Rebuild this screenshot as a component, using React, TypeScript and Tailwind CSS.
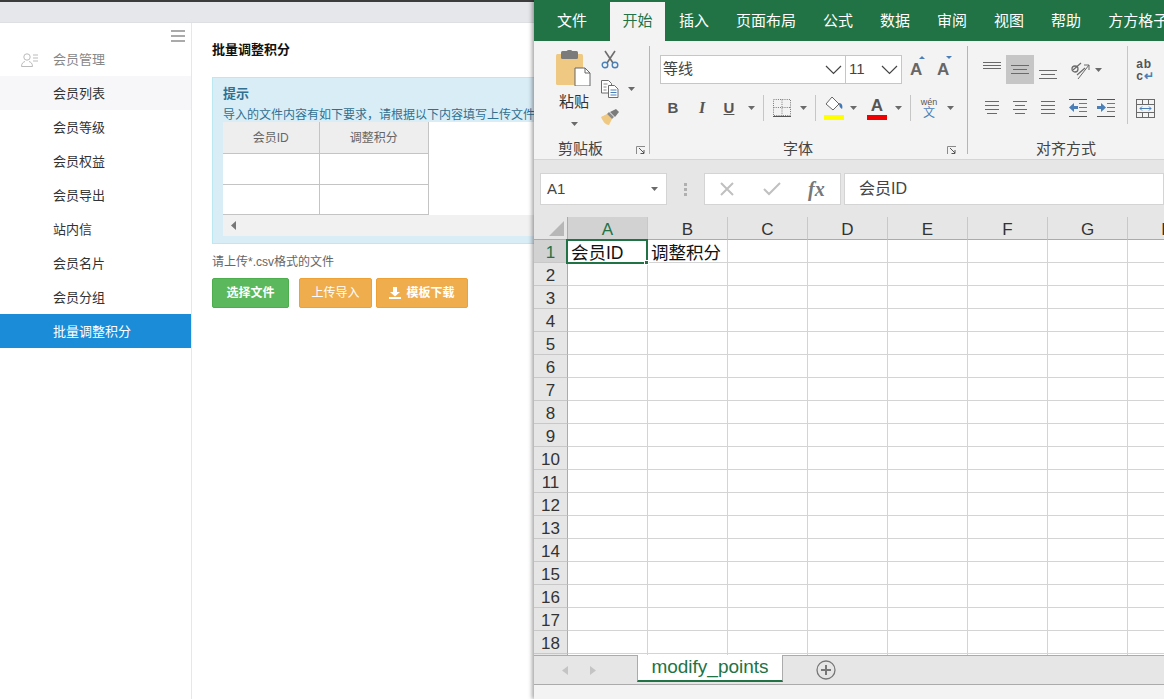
import React from "react";

const CJK = "font-['Liberation_Sans','Noto_Sans_CJK_SC',sans-serif]";

const sideItems = ["会员列表", "会员等级", "会员权益", "会员导出", "站内信", "会员名片", "会员分组", "批量调整积分"];
const tabs = ["插入", "页面布局", "公式", "数据", "审阅", "视图", "帮助", "方方格子"];
const cols = ["A", "B", "C", "D", "E", "F", "G", "H"];
const rows = Array.from({ length: 19 }, (_, i) => i + 1);

const Caret = ({ className = "" }: { className?: string }) => (
  <svg width="7" height="4" viewBox="0 0 7 4" className={className}>
    <path d="M0 0h7L3.5 4z" fill="#6a6a6a" />
  </svg>
);

const Chevron = () => (
  <svg width="17" height="10" viewBox="0 0 17 10" fill="none">
    <path d="M1 1l7.5 7.5L16 1" stroke="#444" strokeWidth="1.2" />
  </svg>
);

const Launcher = ({ className = "" }: { className?: string }) => (
  <svg width="10" height="9" viewBox="0 0 10 9" className={className} fill="none">
    <path d="M.5 8V.5H9" stroke="#8a8a8a" />
    <path d="M3 2l5 5M8 4v3.5H4.5" stroke="#555" />
  </svg>
);

const Lines = ({ ys, w = [18, 14, 18] }: { ys: number[]; w?: number[] }) => (
  <svg width="18" height="20" viewBox="0 0 18 20">
    {ys.map((y, i) => (
      <rect key={i} x={(18 - w[i % w.length]) / 2} y={y} width={w[i % w.length]} height="1" fill="#6a6a6a" />
    ))}
  </svg>
);

const Indent = ({ dir }: { dir: "l" | "r" }) => (
  <svg width="19" height="18" viewBox="0 0 19 18">
    {[0, 17].map((y) => (
      <rect key={y} x="0" y={y} width="18" height="1" fill="#555" />
    ))}
    {[4, 8, 12].map((y) => (
      <rect key={y} x="10" y={y} width="8" height="1" fill="#777" />
    ))}
    {dir === "l" ? (
      <path d="M0 8.5L5 4v3h4v3H5v3z" fill="#4a7fb8" />
    ) : (
      <path d="M9 8.5L4 4v3H0v3h4v3z" fill="#4a7fb8" />
    )}
  </svg>
);

const PasteIcon = () => (
  <svg width="36" height="36" viewBox="0 0 36 36">
    <rect x="0" y="4" width="27" height="31" rx="1.5" fill="#efc881" />
    <rect x="5" y="1" width="17" height="8" rx="1.5" fill="#7b7b7b" />
    <rect x="10.5" y="0" width="6" height="4" rx="2" fill="#7b7b7b" />
    <path d="M19 18h10l5 5v13H19z" fill="#fff" stroke="#666" />
    <path d="M29 18v5h5" fill="none" stroke="#666" />
  </svg>
);

const CutIcon = () => (
  <svg width="18" height="19" viewBox="0 0 18 19" fill="none">
    <path d="M4 1l8 12M14 1L6 13" stroke="#6d6d6d" strokeWidth="1.6" />
    <circle cx="4" cy="15" r="2.8" stroke="#4a7fb8" strokeWidth="1.4" />
    <circle cx="14" cy="15" r="2.8" stroke="#4a7fb8" strokeWidth="1.4" />
  </svg>
);

const CopyIcon = () => (
  <svg width="18" height="18" viewBox="0 0 18 18" fill="#fff">
    <path d="M.5.5h7l3 3V13H.5z" stroke="#6d6d6d" />
    <path d="M7.5 5.5h6l3.5 3.5v8.5H7.5z" stroke="#6d6d6d" />
    <path d="M9.5 10h6M9.5 12.5h6M9.5 15h6" stroke="#4a7fb8" />
    <path d="M2.500 4h4M2.500 7h3M2.500 10h3" stroke="#888" />
  </svg>
);

const BrushIcon = () => (
  <svg width="18" height="16" viewBox="0 0 18 16">
    <path d="M0 8l6-3 5 5-3 6c-3 0-6-3-8-8z" fill="#efc881" />
    <path d="M6 5l2-2 5 5-2 2z" fill="#8a8a8a" />
    <path d="M9 3l6-3 3 3-4 5z" fill="#7b7b7b" />
  </svg>
);

const BorderIcon = () => (
  <svg width="18" height="18" viewBox="0 0 18 18" fill="none">
    <path d="M.5.5h17v16H.5zM9 .5v16M.5 8.500h17" stroke="#777" strokeDasharray="1 1.2" />
    <path d="M0 17.500h18" stroke="#555" />
  </svg>
);

const FillIcon = () => (
  <svg width="22" height="20" viewBox="0 0 22 20">
    <path d="M9 1l7 7-6 6-7-6z" fill="#fff" stroke="#666" />
    <path d="M16 7c3 0 4 3 3 6-2-1-3-3-3-6z" fill="#3f78b5" />
  </svg>
);

const MergeIcon = () => (
  <svg width="19" height="19" viewBox="0 0 19 19" fill="none">
    <rect x=".5" y=".5" width="18" height="18" stroke="#6a6a6a" />
    <path d="M0 5.500h19M0 13.500h19M6.500 0v5M12.500 0v5M6.500 14v5M12.500 14v5" stroke="#6a6a6a" />
    <path d="M4 9.500h11M6 7.500l-2 2 2 2M13 7.500l2 2-2 2" stroke="#4a7fb8" />
  </svg>
);

const OrientIcon = () => (
  <svg width="20" height="20" viewBox="0 0 20 20" fill="none">
    <path d="M3 10l8-7M7 15l8-7" stroke="#6a6a6a" strokeWidth="1.2" />
    <path d="M14 5h5v5M19 5L8 19" stroke="#6a6a6a" />
    <circle cx="5" cy="9" r="3" stroke="#6a6a6a" strokeWidth="1.3" />
  </svg>
);

const Slot = ({ w, children, className = "" }: { w: string; children?: React.ReactNode; className?: string }) => (
  <div className={`flex shrink-0 items-center justify-center ${w} ${className}`}>{children}</div>
);

const Sep = ({ className = "" }: { className?: string }) => <div className={`h-[26px] w-px shrink-0 bg-[#c6c6c6] ${className}`} />;

export default function App() {
  return (
    <div className={`flex h-[699px] w-[1164px] overflow-hidden bg-white ${CJK}`}>
      {/* Browser page */}
      <div className="flex h-full w-[534px] shrink-0 flex-col">
        <div className="h-[2px] bg-[#3c3c3c]" />
        <div className="h-[21px] border-b border-[#dedfe2] bg-[#e6e7eb]" />
        <div className="flex min-h-0 flex-1">
          <aside className="w-[192px] shrink-0 border-r border-[#e7e7eb]">
            <div className="flex h-[19px] items-end justify-end pr-[6px]">
              <div className="flex w-[14px] flex-col gap-[3px]">
                <div className="h-[2px] bg-[#aaa]" />
                <div className="h-[2px] bg-[#aaa]" />
                <div className="h-[2px] bg-[#aaa]" />
              </div>
            </div>
            <div className="flex h-[34px] items-center pt-px text-[13px] text-[#888]">
              <svg width="18" height="14" viewBox="0 0 18 14" fill="none" className="ml-[21px] mr-[14px]">
                <circle cx="6" cy="4" r="3.2" stroke="#bbb" />
                <path d="M.5 13.500c0-3.500 2-4.500 3.500-5M11.500 13.500c0-3.500-2-4.500-3.500-5M.5 13.500h11" stroke="#bbb" />
                <path d="M12 2h5M12 5h5M12 8h5" stroke="#bbb" />
              </svg>
              会员管理
            </div>
            {sideItems.map((s, i) => (
              <div
                key={s}
                className={`flex h-[34px] items-center pl-[53px] pt-px text-[13px] ${
                  i === 0 ? "bg-[#f7f7f9] text-[#333]" : i === 7 ? "bg-[#1a8cd8] text-white" : "text-[#333]"
                }`}
              >
                {s}
              </div>
            ))}
          </aside>
          <main className="min-w-0 flex-1 overflow-hidden pl-[20px] pt-[17px]">
            <h1 className="h-[20px] whitespace-nowrap text-[13px] font-bold leading-[20px] text-[#111]">批量调整积分</h1>
            <div className="mt-[17px] h-[167px] w-[340px] border border-[#bce8f1] bg-[#d9edf7] pl-[10px] pt-[7px] text-[#31708f]">
              <div className="h-[19px] text-[13px] font-bold leading-[18px]">提示</div>
              <div className="h-[18px] overflow-hidden whitespace-nowrap text-[12px] leading-[22px]">
                导入的文件内容有如下要求，请根据以下内容填写上传文件
              </div>
              <div className="flex h-[93px] w-[320px] bg-white">
                <table className="h-[92px] w-[206px] table-fixed border-collapse text-[12px] text-[#666]">
                  <tbody>
                    <tr className="h-[31px] bg-[#eeeeee]">
                      <td className="w-[96px] border border-[#c4c4c4] border-l-0 border-t-0 pt-[2px] text-center">会员ID</td>
                      <td className="border border-[#c4c4c4] border-t-0 pt-[2px] text-center">调整积分</td>
                    </tr>
                    <tr className="h-[31px]">
                      <td className="border border-[#c4c4c4] border-l-0" />
                      <td className="border border-[#c4c4c4]" />
                    </tr>
                    <tr className="h-[30px]">
                      <td className="border border-[#c4c4c4] border-l-0" />
                      <td className="border border-[#c4c4c4]" />
                    </tr>
                  </tbody>
                </table>
              </div>
              <div className="flex h-[21px] w-[320px] items-center bg-[#f1f1f1] pl-[8px]">
                <svg width="5" height="9" viewBox="0 0 5 9">
                  <path d="M5 0v9L0 4.500z" fill="#777" />
                </svg>
              </div>
            </div>
            <p className="mt-[9px] h-[18px] whitespace-nowrap text-[12px] leading-[18px] text-[#666]">请上传*.csv格式的文件</p>
            <div className="mt-[7px] flex h-[30px] text-[12px] text-white">
              <button className="w-[77px] rounded-[2px] border border-[#4cae4c] bg-[#5cb85c] font-bold">选择文件</button>
              <button className="ml-[10px] w-[73px] rounded-[2px] border border-[#eea236] bg-[#f0ad4e]">上传导入</button>
              <button className="ml-[4px] flex w-[92px] items-center justify-center gap-[5px] rounded-[2px] border border-[#eea236] bg-[#f0ad4e] font-bold">
                <svg width="12" height="12" viewBox="0 0 12 12" fill="#fff">
                  <path d="M4 0h4v5h3L6 9.500 1 5h3zM0 10h12v2H0z" />
                </svg>
                模板下载
              </button>
            </div>
          </main>
        </div>
      </div>

      {/* Excel window */}
      <div className="relative flex h-full w-[630px] shrink-0 flex-col overflow-hidden shadow-[-2px_0_4px_rgba(0,0,0,0.35)]">
        {/* Tabs */}
        <nav className="flex h-[41px] shrink-0 items-end overflow-hidden whitespace-nowrap bg-[#217346] text-[15px] text-white">
          <div className="flex h-[39px] shrink-0 items-center pl-[23px] pr-[23px]">文件</div>
          <div className="flex h-[39px] w-[55px] shrink-0 items-center justify-center bg-[#f3f3f3] text-[#217346]">开始</div>
          {tabs.map((t) => (
            <div key={t} className="flex h-[39px] shrink-0 items-center pl-[14px] pr-[13px]">
              {t}
            </div>
          ))}
        </nav>

        {/* Ribbon */}
        <div className="flex h-[119px] shrink-0 overflow-hidden border-b border-[#d5d5d5] bg-[#f3f3f3] text-[#444]">
          {/* Clipboard */}
          <section className="my-[5px] flex w-[116px] shrink-0 flex-col border-r border-[#b5b5b5]">
            <div className="flex h-[84px] shrink-0">
              <div className="ml-[22px] flex w-[36px] flex-col items-center pt-[4px]">
                <PasteIcon />
                <span className="mt-[6px] whitespace-nowrap text-[15px] leading-[20px] text-[#333]">粘贴</span>
                <Caret className="mt-[10px]" />
              </div>
              <div className="ml-[9px] flex flex-col pt-[4px]">
                <CutIcon />
                <div className="mt-[11px] flex items-center gap-[9px]">
                  <CopyIcon />
                  <Caret />
                </div>
                <div className="mt-[11px]">
                  <BrushIcon />
                </div>
              </div>
            </div>
            <div className="flex h-[24px] shrink-0 items-start pl-[24px] pt-[9px] text-[15px] leading-[20px]">
              <span>剪贴板</span>
              <Launcher className="ml-[33px] mt-[7px]" />
            </div>
          </section>

          {/* Font */}
          <section className="my-[5px] flex w-[318px] shrink-0 flex-col border-r border-[#b5b5b5] pl-[10px]">
            <div className="mt-[9px] flex h-[29px] shrink-0 items-center">
              <div className="flex h-full w-[186px] items-center justify-between border border-[#c6c6c6] bg-white pl-[2px] pr-[3px] text-[15px]">
                等线
                <Chevron />
              </div>
              <div className="flex h-full w-[56px] items-center justify-between border border-l-0 border-[#c6c6c6] bg-white pl-[3px] pr-[3px] text-[15px]">
                11
                <Chevron />
              </div>
              <span className="relative ml-[8px] w-[14px] text-[17px] font-bold text-[#666]">
                A
                <svg width="6" height="3" viewBox="0 0 6 3" className="absolute -top-[1px] left-[9px]">
                  <path d="M0 3h6L3 0z" fill="#4a7fb8" />
                </svg>
              </span>
              <span className="relative ml-[13px] w-[14px] text-[17px] font-bold text-[#666]">
                A
                <svg width="6" height="3" viewBox="0 0 6 3" className="absolute -top-[1px] left-[9px]">
                  <path d="M0 0h6L3 3z" fill="#4a7fb8" />
                </svg>
              </span>
            </div>
            <div className="mt-[11px] flex h-[26px] shrink-0 items-center">
              <Slot w="w-[26px]" className="font-['Liberation_Sans'] text-[15px] font-bold text-[#555]">B</Slot>
              <Slot w="w-[32px]" className="font-['Liberation_Serif'] text-[16px] font-bold italic text-[#555]">I</Slot>
              <Slot w="w-[22px]" className="text-[15px] font-bold text-[#555] underline">U</Slot>
              <Slot w="w-[22px]"><Caret /></Slot>
              <Sep className="ml-[1px]" />
              <Slot w="w-[24px]" className="ml-[6px]"><BorderIcon /></Slot>
              <Slot w="w-[16px]" className="ml-[1px]"><Caret /></Slot>
              <Sep className="ml-[4px]" />
              <div className="ml-[5px] flex w-[26px] shrink-0 flex-col items-center">
                <FillIcon />
                <div className="-mt-[1px] h-[5px] w-[20px] bg-[#ffff00]" />
              </div>
              <Slot w="w-[10px]" className="ml-[1px]"><Caret /></Slot>
              <div className="ml-[7px] flex w-[24px] shrink-0 flex-col items-center">
                <span className="text-[17px] font-bold leading-[18px] text-[#555]">A</span>
                <div className="h-[5px] w-[20px] bg-[#f00000]" />
              </div>
              <Slot w="w-[18px]"><Caret /></Slot>
              <Sep className="ml-[3px]" />
              <div className="ml-[8px] flex w-[20px] shrink-0 flex-col items-center leading-none">
                <span className="text-[9px] text-[#555]">wén</span>
                <span className="text-[12px] text-[#4a7fb8]">文</span>
              </div>
              <Slot w="w-[22px]"><Caret /></Slot>
            </div>
            <div className="flex h-[33px] shrink-0 items-start pt-[18px] text-[15px] leading-[20px]">
              <span className="ml-[123px]">字体</span>
              <Launcher className="ml-[134px] mt-[7px]" />
            </div>
          </section>

          {/* Alignment */}
          <section className="my-[5px] flex w-[196px] shrink-0 flex-col pl-[10px]">
            <div className="flex h-[78px] shrink-0">
              <div className="flex w-[150px] shrink-0 flex-col border-r border-[#c6c6c6]">
                <div className="mt-[9px] flex h-[29px] shrink-0 items-center">
                  <Slot w="w-[28px]"><Lines ys={[2, 5, 8]} w={[18, 18, 18]} /></Slot>
                  <Slot w="w-[28px]" className="h-full bg-[#c6c6c6]"><Lines ys={[5, 9, 13]} w={[18, 14, 18]} /></Slot>
                  <Slot w="w-[28px]"><Lines ys={[10, 14, 18]} w={[18, 14, 18]} /></Slot>
                  <Slot w="w-[24px]" className="ml-[6px]"><OrientIcon /></Slot>
                  <Slot w="w-[12px]"><Caret /></Slot>
                </div>
                <div className="mt-[11px] flex h-[26px] shrink-0 items-center">
                  <Slot w="w-[28px]"><Lines ys={[3, 7, 11, 15]} w={[14, 14, 14, 10]} /></Slot>
                  <Slot w="w-[28px]"><Lines ys={[3, 7, 11, 15]} w={[14, 10, 14, 10]} /></Slot>
                  <Slot w="w-[28px]"><Lines ys={[3, 7, 11, 15]} w={[14, 14, 14, 14]} /></Slot>
                  <Slot w="w-[28px]" className="ml-[2px]"><Indent dir="l" /></Slot>
                  <Slot w="w-[28px]"><Indent dir="r" /></Slot>
                </div>
              </div>
              <div className="flex flex-col items-center pl-[8px]">
                <div className="mt-[12px] flex h-[22px] flex-col items-start font-['Liberation_Sans'] text-[12px] font-bold leading-[12px] tracking-[1px] text-[#555]">
                  <span>ab</span>
                  <span>c<span className="text-[#4a7fb8]">↵</span></span>
                </div>
                <div className="mt-[19px]"><MergeIcon /></div>
              </div>
            </div>
            <div className="flex h-[30px] shrink-0 items-start pt-[15px] text-[15px] leading-[20px]">
              <span className="ml-[58px] whitespace-nowrap">对齐方式</span>
            </div>
          </section>
        </div>

        {/* Formula bar */}
        <div className="flex h-[57px] shrink-0 bg-[#e6e6e6] pl-[6px] pt-[13px]">
          <div className="flex h-[32px] w-[127px] items-center justify-between border border-[#d4d4d4] bg-white pl-[6px] pr-[8px] text-[15px] text-[#444]">
            A1
            <Caret />
          </div>
          <div className="ml-[17px] flex h-[32px] w-[3px] flex-col items-center justify-center gap-[2px]">
            <div className="h-[3px] w-[3px] bg-[#b0b0b0]" />
            <div className="h-[3px] w-[3px] bg-[#b0b0b0]" />
            <div className="h-[3px] w-[3px] bg-[#b0b0b0]" />
          </div>
          <div className="ml-[17px] flex h-[32px] w-[137px] items-center border border-[#d4d4d4] bg-white pl-[15px]">
            <svg width="14" height="14" viewBox="0 0 14 14" fill="none">
              <path d="M1 1l12 12M13 1L1 13" stroke="#c0c0c0" strokeWidth="2" />
            </svg>
            <svg width="18" height="14" viewBox="0 0 18 14" fill="none" className="ml-[29px]">
              <path d="M1 7l5 5L17 1" stroke="#c0c0c0" strokeWidth="2" />
            </svg>
            <span className="ml-[27px] font-['Liberation_Serif'] text-[20px] font-bold italic text-[#777]">fx</span>
          </div>
          <div className="ml-[3px] flex h-[32px] flex-1 items-center border border-[#d4d4d4] bg-white pl-[14px] text-[16px] text-[#444]">
            会员ID
          </div>
        </div>

        {/* Sheet */}
        <div className="relative min-h-0 flex-1 overflow-hidden bg-white">
          <div className="flex h-[23px] bg-[#e6e6e6] text-[17px] text-[#333]">
            <div className="flex w-[34px] shrink-0 items-end justify-end border-b border-r border-[#ababab] pb-[3px] pr-[3px]">
              <svg width="15" height="15" viewBox="0 0 15 15">
                <path d="M15 0v15H0z" fill="#b7b7b7" />
              </svg>
            </div>
            {cols.map((c, i) => (
              <div
                key={c}
                className={`flex w-[80px] shrink-0 items-center justify-center border-b border-r border-b-[#ababab] border-r-[#c8c8c8] pt-[3px] ${
                  i === 0 ? "bg-[#d2d2d2] text-[#217346]" : ""
                }`}
              >
                {c}
              </div>
            ))}
          </div>
          {rows.map((r) => (
            <div key={r} className="flex h-[23px]">
              <div
                className={`flex w-[34px] shrink-0 items-center justify-center border-b border-r border-b-[#c8c8c8] border-r-[#ababab] pt-[4px] text-[17px] ${
                  r === 1 ? "bg-[#d2d2d2] text-[#217346]" : "bg-[#e6e6e6] text-[#333]"
                }`}
              >
                {r < 19 ? r : ""}
              </div>
              {cols.map((c) => (
                <div
                  key={c}
                  className="flex w-[80px] shrink-0 items-center overflow-visible whitespace-nowrap border-b border-r border-[#d4d4d4] pl-[3px] pt-[4px] text-[17.5px] text-[#111]"
                >
                  {r === 1 && c === "A" ? "会员ID" : r === 1 && c === "B" ? "调整积分" : ""}
                </div>
              ))}
            </div>
          ))}
          <div className="absolute left-[32px] top-[22px] h-[25px] w-[82px] border-2 border-[#217346]">
            <div className="absolute -bottom-[3px] -right-[3px] h-[5px] w-[5px] border border-white bg-[#217346]" />
          </div>
        </div>

        {/* Sheet tabs */}
        <div className="flex h-[30px] shrink-0 border-b border-t border-[#ababab] bg-[#e6e6e6]">
          <div className="flex w-[103px] items-center gap-[22px] pl-[28px]">
            <svg width="6" height="9" viewBox="0 0 6 9"><path d="M6 0v9L0 4.500z" fill="#c4c4c4" /></svg>
            <svg width="6" height="9" viewBox="0 0 6 9"><path d="M0 0v9l6-4.500z" fill="#c4c4c4" /></svg>
          </div>
          <div className="-mt-px flex h-[27px] w-[146px] items-center justify-center border-b-2 border-l border-r border-b-[#217346] border-l-[#ababab] border-r-[#ababab] bg-white text-[19px] text-[#217346]">
            modify_points
          </div>
          <div className="ml-[33px] flex items-center">
            <svg width="20" height="20" viewBox="0 0 20 20" fill="none">
              <circle cx="10" cy="10" r="9" stroke="#777" strokeWidth="1.3" />
              <path d="M10 5v10M5 10h10" stroke="#777" strokeWidth="2" />
            </svg>
          </div>
        </div>
        <div className="h-[14px] shrink-0 bg-[#f3f3f3]" />
      </div>
    </div>
  );
}
